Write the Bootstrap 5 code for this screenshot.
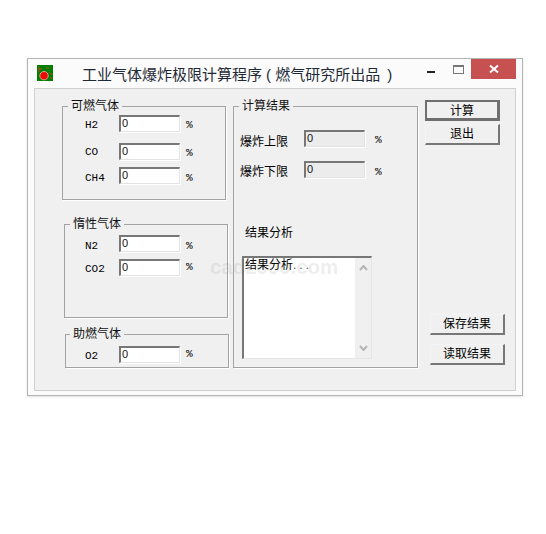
<!DOCTYPE html>
<html lang="zh-CN">
<head>
    <meta charset="UTF-8">
    <title>工业气体爆炸极限计算程序</title>
    <link href="https://cdn.jsdelivr.net/npm/bootstrap@5.3.0/dist/css/bootstrap.min.css" rel="stylesheet">
    <style>
        html, body { height: 100%; }
        body {
            background: #fff;
            padding: 58px 24px 0 27px;
            font-family: "Liberation Sans", "Noto Sans CJK SC", sans-serif;
            font-size: 12px;
            color: #000;
        }
        .win-frame {
            position: relative;
            width: 496px;
            height: 338px;
            background: #fbfbfb;
            border: 1px solid #b4b4b4;
            box-shadow: 0 1px 2px rgba(0, 0, 0, .12);
        }
        .win-title { height: 29px; }
        .win-icon { margin: 6px 0 0 9px; width: 16px; height: 16px; flex: none; }
        .win-name {
            margin: 5px 0 0 29px;
            font-size: 15px;
            line-height: 22px;
            color: #1f2a36;
            white-space: nowrap;
        }
        .win-open { margin-left: 4px; }
        .win-shut { margin-left: 3px; }
        .win-ctl { position: absolute; top: 0; }
        .win-min { left: 399px; top: 12px; width: 8px; height: 2px; background: #222; }
        .win-max { left: 425px; top: 6px; width: 11px; height: 9px; border: 1px solid #777; border-top-width: 2px; }
        .win-close {
            left: 443px; width: 45px; height: 20px; background: #c75050;
            display: flex; align-items: center; justify-content: center;
        }
        .win-body {
            margin: 0 6px;
            height: 303px;
            background: #f0f0f0;
            border: 1px solid #d0d0d0;
            padding-top: 17px;
        }
        .col-gas { width: 195px; flex: none; }
        .col-res { width: 185px; flex: none; margin-left: 3px; }
        .col-btn { width: 84px; flex: none; padding-left: 3px; }
        .grp {
            position: relative;
            border: 1px solid #a3a3a3;
            box-shadow: 1px 1px 0 #fff;
        }
        .grp-cap {
            position: absolute;
            top: -8px;
            left: 5px;
            background: #f0f0f0;
            padding: 0 3px;
            font-size: 12px;
            line-height: 15px;
            color: #111;
        }
        .grp-a { margin-left: 27px; width: 164px; height: 94px; padding-top: 8px; }
        .grp-b { margin: 24px 0 0 29px; width: 164px; height: 94px; padding-top: 10px; }
        .grp-c { margin: 16px 0 0 30px; width: 164px; height: 34px; padding-top: 11px; }
        .grp-c .grp-cap { left: 4px; }
        .grp-r { height: 262px; padding: 23px 0 0 6px; }
        .gas-row { display: flex; height: 17px; align-items: center; }
        .gas-gap1 { margin-top: 11px; }
        .gas-gap2 { margin-top: 7px; }
        .gas-name { width: 34px; margin-left: 22px; font: 11px/17px "Liberation Mono", monospace; }
        .grp-b .gas-name { margin-left: 20px; }
        .grp-c .gas-name { margin-left: 19px; }
        .unit { margin-left: 6px; font: 11px/17px "Liberation Mono", monospace; }
        .down-1 { position: relative; top: 1px; }
        .down-2 { position: relative; top: 2px; }
        .down-3 { position: relative; top: 3px; }
        .down-4 { position: relative; top: 4px; }
        .sunk {
            width: 61px; height: 17px;
            border: 1px solid;
            border-color: #777 #e3e3e3 #e3e3e3 #777;
            border-top-width: 2px;
            border-left-width: 2px;
            background: #fff;
            padding: 0 0 0 1px;
            font: 11px/13px "Liberation Sans", sans-serif;
            color: #111;
            box-shadow: 1px 1px 0 #fff;
        }
        .sunk-ro { background: #ececec; }
        .res-row { display: flex; height: 17px; align-items: center; }
        .res-next { margin-top: 14px; }
        .res-name { width: 64px; font-size: 12px; line-height: 17px; }
        .res-unit { margin-left: 10px; }
        .ana-label { margin: 47px 0 0 5px; font-size: 12px; line-height: 17px; }
        .ana-box {
            position: relative;
            margin: 14px 0 0 2px;
            width: 130px; height: 103px;
            border: 1px solid #e6e6e6;
            border-top: 2px solid #777;
            border-left: 2px solid #777;
            background: #fff;
            display: flex;
        }
        .ana-text { flex: 1; padding-left: 1px; font-size: 12px; line-height: 15px; white-space: nowrap; }
        .ana-dots { letter-spacing: 3px; color: #555; }
        .ana-bar {
            width: 16px; background: #f0f0f0;
            display: flex; flex-direction: column; justify-content: space-between; align-items: center;
            padding: 7px 0;
        }
        .mark-wm {
            position: absolute;
            left: 175px; top: 168px;
            font: bold 20.4px/20px "Liberation Sans", sans-serif;
            color: rgba(120, 120, 120, .15);
            pointer-events: none;
        }
        .btn-win {
            display: block;
            width: 75px; height: 21px;
            padding: 0;
            border: 1px solid;
            border-color: #f4f4f4 #777 #777 #f4f4f4;
            border-bottom-width: 2px;
            border-right-width: 2px;
            border-radius: 0;
            background: #f0f0f0;
            color: #000;
            font-size: 12px;
            line-height: 18px;
        }
        .btn-def { border: 2px solid #6f6f6f; border-bottom-width: 3px; border-right-width: 3px; }
        .btn-calc { margin-top: -6px; }
        .btn-quit { margin-top: 3px; }
        .btn-save { margin: 169px 0 0 9px; }
        .btn-load { margin: 9px 0 0 9px; }
    </style>
</head>
<body>
    <div class="win-frame">
        <div class="win-title d-flex">
            <svg class="win-icon" viewBox="0 0 16 16">
                <rect width="16" height="16" fill="#008000"/>
                <path d="M2 2v5M2 4h3M9 3h3M12 7l3 3M13 12l2 2" stroke="#c8402a" stroke-width="1" fill="none"/>
                <circle cx="7" cy="10.7" r="4.2" fill="#f00808" stroke="#e8a090" stroke-width="1"/>
            </svg>
            <div class="win-name">工业气体爆炸极限计算程序<span class="win-open">(</span> 燃气研究所出品 <span class="win-shut">)</span></div>
            <div class="win-ctl win-min"></div>
            <div class="win-ctl win-max"></div>
            <div class="win-ctl win-close">
                <svg width="10" height="10" viewBox="0 0 10 10"><path d="M1 1.5l8 7M9 1.5l-8 7" stroke="#fff" stroke-width="2"/></svg>
            </div>
        </div>
        <div class="win-body d-flex position-relative">
            <div class="col-gas">
                <div class="grp grp-a">
                    <span class="grp-cap">可燃气体</span>
                    <div class="gas-row"><span class="gas-name down-2">H2</span><div class="sunk">0</div><span class="unit down-2">%</span></div>
                    <div class="gas-row gas-gap1"><span class="gas-name down-1">CO</span><div class="sunk">0</div><span class="unit down-2">%</span></div>
                    <div class="gas-row gas-gap2"><span class="gas-name down-3">CH4</span><div class="sunk">0</div><span class="unit down-3">%</span></div>
                </div>
                <div class="grp grp-b">
                    <span class="grp-cap">惰性气体</span>
                    <div class="gas-row"><span class="gas-name down-3">N2</span><div class="sunk">0</div><span class="unit down-3">%</span></div>
                    <div class="gas-row gas-gap2"><span class="gas-name down-2">CO2</span><div class="sunk">0</div><span class="unit">%</span></div>
                </div>
                <div class="grp grp-c">
                    <span class="grp-cap">助燃气体</span>
                    <div class="gas-row"><span class="gas-name down-2">O2</span><div class="sunk">0</div><span class="unit">%</span></div>
                </div>
            </div>
            <div class="col-res">
                <div class="grp grp-r">
                    <span class="grp-cap">计算结果</span>
                    <div class="res-row"><span class="res-name down-4">爆炸上限</span><div class="sunk sunk-ro">0</div><span class="unit res-unit down-2">%</span></div>
                    <div class="res-row res-next"><span class="res-name down-3">爆炸下限</span><div class="sunk sunk-ro">0</div><span class="unit res-unit down-3">%</span></div>
                    <div class="ana-label">结果分析</div>
                    <div class="ana-box">
                        <div class="ana-text">结果分析<span class="ana-dots">...</span></div>
                        <div class="ana-bar">
                            <svg width="9" height="6" viewBox="0 0 9 6"><path d="M1 5l3.5-4L8 5" fill="none" stroke="#b5b5b5" stroke-width="2"/></svg>
                            <svg width="9" height="6" viewBox="0 0 9 6"><path d="M1 1l3.5 4L8 1" fill="none" stroke="#b5b5b5" stroke-width="2"/></svg>
                        </div>
                    </div>
                </div>
            </div>
            <div class="col-btn d-flex flex-column">
                <button class="btn btn-win btn-def ms-1 btn-calc">计算</button>
                <button class="btn btn-win ms-1 btn-quit">退出</button>
                <button class="btn btn-win btn-save">保存结果</button>
                <button class="btn btn-win btn-load">读取结果</button>
            </div>
            <div class="mark-wm">cad2000.com</div>
        </div>
    </div>
</body>
</html>
